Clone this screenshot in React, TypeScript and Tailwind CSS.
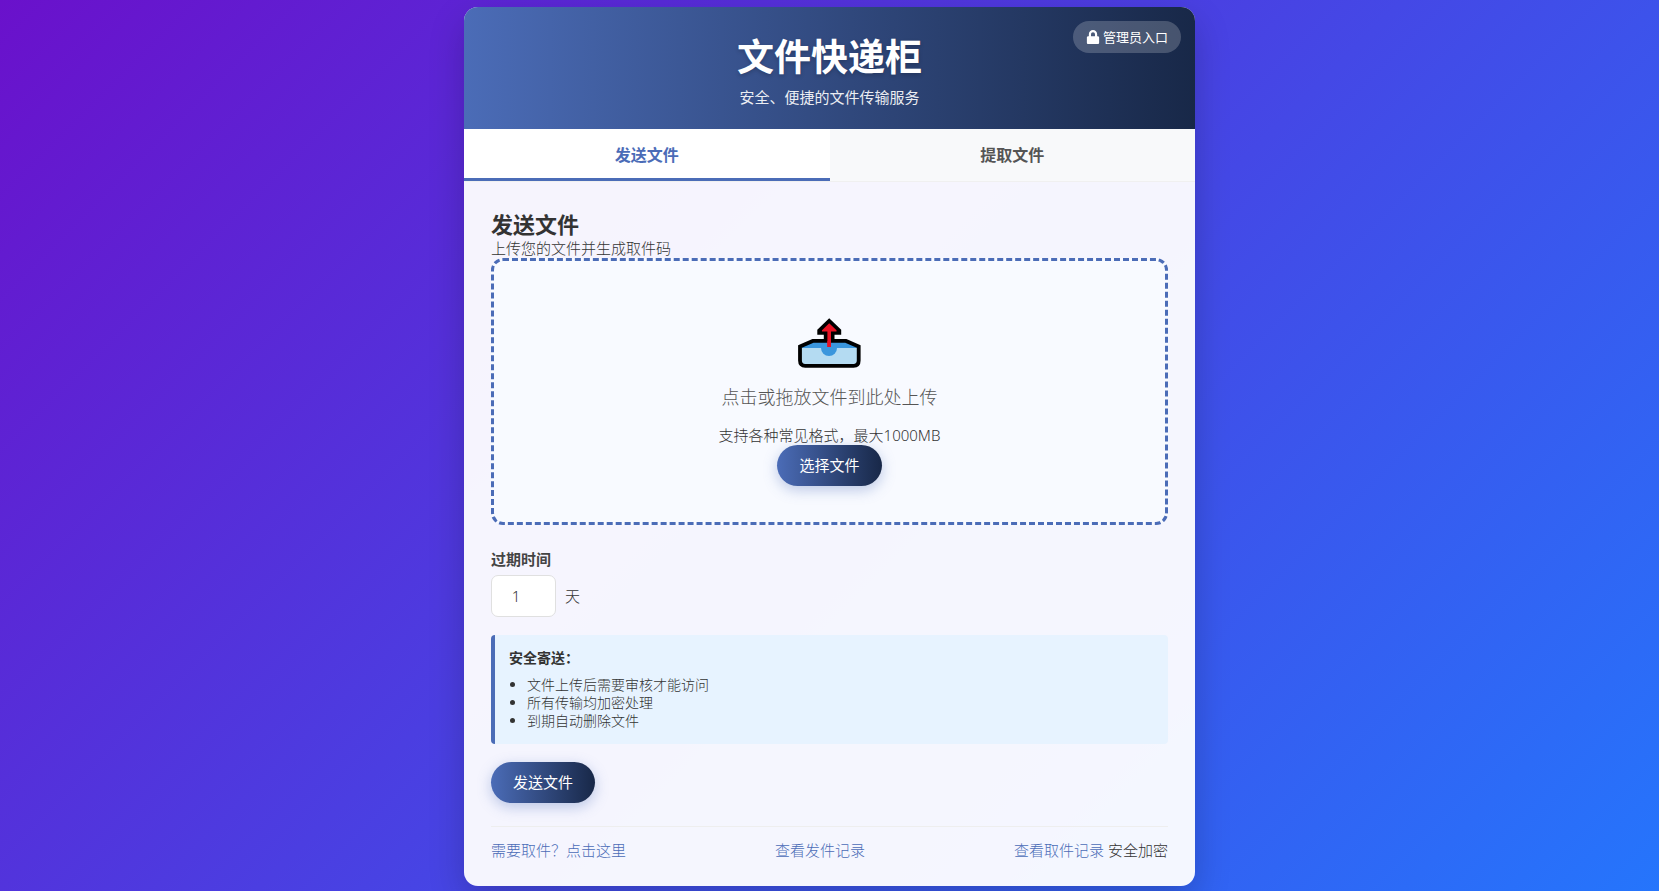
import { FaLock } from 'react-icons/fa';

const tips = ['文件上传后需要审核才能访问', '所有传输均加密处理', '到期自动删除文件'];

const pillButton =
  'inline-block cursor-pointer rounded-full bg-linear-to-r/srgb from-[#4b6cb7] to-[#182848] px-[22px] py-[10px] text-[15px] leading-[21px] font-normal text-white shadow-[0_4px_14px_rgba(75,108,183,0.35)]';

function OutboxIcon() {
  return (
    <svg viewBox="0 0 65 52" className="h-[52px] w-[65px]" aria-hidden>
      <path d="M4 30 L16 24.5 H48.5 L61 30 V32 H4 Z" fill="#3a96dd" />
      <path d="M4 31 H61 V44 Q61 47.500 57.500 47.500 H7.500 Q4 47.500 4 44 Z" fill="#b4dbf2" />
      <path d="M24 30 H40 V31 A8 8 0 0 1 24 31 Z" fill="#3a96dd" />
      <path d="M3 29.500 L15.800 23.900 H49 L61.700 29.500 V43.500 Q61.700 48.800 56.500 48.800 H8.200 Q3 48.800 3 43.500 Z" fill="none" stroke="#000" strokeWidth="3.800" strokeLinejoin="miter" />
      <path d="M32.200 1.200 L44.200 12.800 V17.800 H37.500 V25 H26.800 V17.800 H20.300 V12.800 Z" fill="#000" />
      <path d="M30.400 24 H34 V30 H30.400 Z" fill="#e81224" />
      <path d="M32.200 6.200 L39.500 13.200 V14.500 H34 V30 H30.400 V14.500 H25 V13.200 Z" fill="#e81224" />
    </svg>
  );
}

export default function App() {
  return (
    <div className="min-h-screen bg-linear-135/srgb from-[#6a11cb] to-[#2575fc] px-4 pt-[7px] pb-[5px] font-['Noto_Sans','Noto_Sans_CJK_SC',sans-serif] text-[15px] leading-5 font-light text-[#333]">
      <main className="mx-auto w-full max-w-[731px] overflow-hidden rounded-[14px] bg-white/95 shadow-[0_14px_36px_rgba(0,0,0,0.2)]">
        <header className="relative bg-linear-to-r/srgb from-[#4b6cb7] to-[#182848] px-7 pt-[26px] pb-[22px] text-center font-normal text-white">
          <h1 className="text-[37px] leading-[48px] font-bold [text-shadow:0_2px_4px_rgba(0,0,0,0.2)]">文件快递柜</h1>
          <p className="mt-[6px] opacity-90">安全、便捷的文件传输服务</p>
          <a
            href="#admin"
            className="absolute top-[14px] right-[14px] flex items-center gap-[3px] rounded-full bg-white/20 px-[13px] py-[6px] text-[13px] leading-5"
          >
            <FaLock className="size-[14px]" />
            管理员入口
          </a>
        </header>

        <nav className="flex border-b border-[#f0f0f0] text-[16px] font-bold">
          <button className="flex-1 cursor-pointer border-b-3 border-[#4b6cb7] bg-white pt-4 pb-[13px] text-[#4b6cb7]">发送文件</button>
          <button className="flex-1 cursor-pointer border-b-3 border-transparent bg-[#f8f9fa] pt-4 pb-[13px] text-[#555]">提取文件</button>
        </nav>

        <div className="px-[27px] pt-7 pb-[26px]">
          <h2 className="text-[22px] leading-[28px] font-bold">发送文件</h2>
          <p>上传您的文件并生成取件码</p>

          <section className="flex flex-col items-center rounded-xl border-3 border-dashed border-[#4b6cb7] bg-[#f8faff] px-9 pt-[56px] pb-9 text-center">
            <OutboxIcon />
            <p className="mt-4 text-[18px] leading-6 text-[#555]">点击或拖放文件到此处上传</p>
            <p className="mt-4">支持各种常见格式，最大1000MB</p>
            <button className={pillButton}>选择文件</button>
          </section>

          <label htmlFor="expire-days" className="mt-6 block font-bold text-[#444]">
            过期时间
          </label>
          <div className="mt-[6px] flex items-center gap-[9px]">
            <input
              id="expire-days"
              type="number"
              min={1}
              defaultValue={1}
              className="h-[42px] w-[65px] rounded-[7px] border border-[#e0e0e0] bg-white px-3 text-center"
            />
            <span>天</span>
          </div>

          <section className="mt-[18px] rounded-[4px] border-l-4 border-[#4b6cb7] bg-[#e7f3ff] px-[14px] py-[14px] text-[14px] leading-[18px]">
            <h3 className="font-bold">安全寄送：</h3>
            <ul className="mt-[9px] list-disc pl-[18px]">
              {tips.map((tip) => (
                <li key={tip}>{tip}</li>
              ))}
            </ul>
          </section>

          <button className={`${pillButton} mt-[18px]`}>发送文件</button>

          <footer className="mt-[23px] flex justify-between border-t border-[#eee] pt-[13px]">
            <a href="#pickup" className="text-[#4b6cb7]">需要取件？点击这里</a>
            <a href="#sent" className="text-[#4b6cb7]">查看发件记录</a>
            <span>
              <a href="#received" className="text-[#4b6cb7]">查看取件记录</a> 安全加密
            </span>
          </footer>
        </div>
      </main>
    </div>
  );
}
